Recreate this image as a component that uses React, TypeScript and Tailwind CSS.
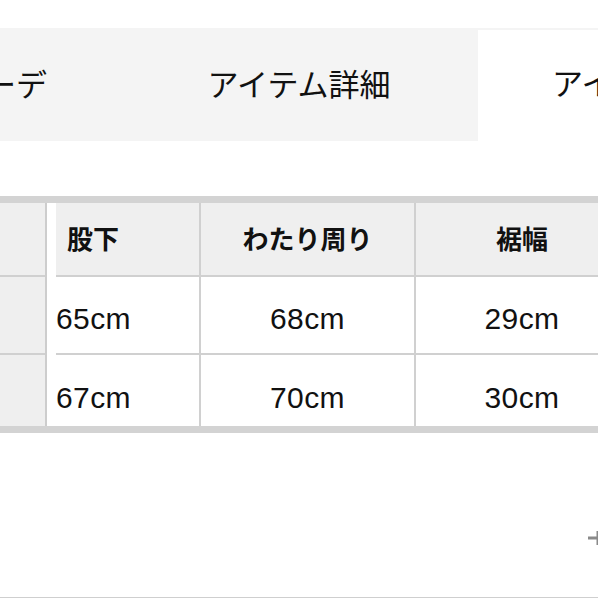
import React from 'react'

const FONT = '"Liberation Sans", "Noto Sans CJK JP", sans-serif'

const ROWS = [
  { a: '65cm', b: '68cm', c: '29cm', h: 'h-[78px]', pt: 'pt-[6px]' },
  { a: '67cm', b: '70cm', c: '30cm', h: 'h-[71px]', pt: 'pt-[13px]' },
]

function TabBar() {
  return (
    <div className="mt-[28px] h-[113px] bg-[#f4f4f4] flex items-end shrink-0">
      <div className="w-[120px] h-full flex items-center justify-end pr-[73px] pt-[4px] overflow-hidden">
        <span className="whitespace-nowrap text-[31px] text-[#111]">コーデ</span>
      </div>
      <div className="w-[358px] h-full flex items-center justify-center pt-[4px]">
        <span className="whitespace-nowrap text-[31px] text-[#111]">アイテム詳細</span>
      </div>
      <div className="flex-1 h-[111px] bg-white flex items-center pl-[74px] overflow-hidden">
        <span className="whitespace-nowrap text-[31px] text-[#111]">アイテムサイズ</span>
      </div>
    </div>
  )
}

function SizeTable() {
  return (
    <div className="mt-[55px] border-y-[7px] border-[#d3d3d3] flex shrink-0">
      {/* 固定の左列 */}
      <div className="w-[47px] shrink-0 bg-[#efefef] border-r-2 border-[#cdcdcd] flex flex-col">
        <div className="h-[74px] border-b-2 border-[#d0d0d0]" />
        <div className="h-[78px] border-b-2 border-[#d0d0d0]" />
        <div className="h-[71px]" />
      </div>
      <div className="w-[9px] shrink-0 bg-white" />
      <div className="flex flex-col">
        <div className="flex h-[74px] border-b-2 border-[#d0d0d0]">
          <div className="w-[145px] shrink-0 bg-[#efefef] border-r-2 border-[#d0d0d0] flex items-center pl-[11px] pt-[2px]">
            <span className="text-[26px] font-bold text-[#111]">股下</span>
          </div>
          <div className="w-[215px] shrink-0 bg-[#efefef] border-r-2 border-[#d0d0d0] flex items-center justify-center pt-[2px]">
            <span className="text-[26px] font-bold text-[#111]">わたり周り</span>
          </div>
          <div className="w-[212px] shrink-0 bg-[#efefef] flex items-center justify-center pt-[2px]">
            <span className="text-[26px] font-bold text-[#111]">裾幅</span>
          </div>
        </div>
        {ROWS.map((r, i) => (
          <div
            key={r.a}
            className={`flex ${r.h} ${i === 0 ? 'border-b-2 border-[#d0d0d0]' : ''}`}
          >
            <div className={`w-[145px] shrink-0 border-r-2 border-[#d0d0d0] flex items-center ${r.pt}`}>
              <span className="text-[30px] tracking-[0.4px] text-[#111]">{r.a}</span>
            </div>
            <div className={`w-[215px] shrink-0 border-r-2 border-[#d0d0d0] flex items-center justify-center ${r.pt}`}>
              <span className="text-[30px] tracking-[0.4px] text-[#111]">{r.b}</span>
            </div>
            <div className={`w-[212px] shrink-0 flex items-center justify-center ${r.pt}`}>
              <span className="text-[30px] tracking-[0.4px] text-[#111]">{r.c}</span>
            </div>
          </div>
        ))}
      </div>
    </div>
  )
}

export default function App() {
  return (
    <div
      className="w-[598px] h-[598px] bg-white overflow-hidden flex flex-col"
      style={{ fontFamily: FONT }}
    >
      <TabBar />
      <SizeTable />
      <div className="flex-1 flex flex-col border-b border-[#cfcfcf]">
        <div className="mt-[97px] flex justify-end">
          <svg width="14" height="16" viewBox="0 0 14 16" className="mr-[-4px]">
            <path d="M0 8h14M10 1v14" stroke="#8a8a8a" strokeWidth="3" fill="none" />
          </svg>
        </div>
      </div>
    </div>
  )
}
